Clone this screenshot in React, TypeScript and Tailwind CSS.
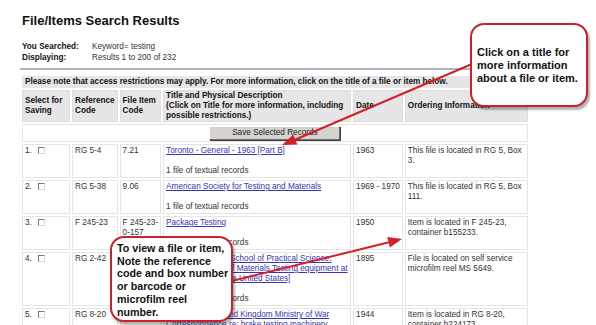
import React from 'react';

type Row = {
  n: string;
  ref: string;
  item: string[];
  title: string[];
  desc?: string;
  date: string;
  order: string[];
};

const ROWS: Row[] = [
  {
    n: '1.',
    ref: 'RG 5-4',
    item: ['7.21'],
    title: ['Toronto - General - 1963 [Part B]'],
    desc: '1 file of textual records',
    date: '1963',
    order: ['This file is located in RG 5, Box', '3.'],
  },
  {
    n: '2.',
    ref: 'RG 5-38',
    item: ['9.06'],
    title: ['American Society for Testing and Materials'],
    desc: '1 file of textual records',
    date: '1969 - 1970',
    order: ['This file is located in RG 5, Box', '111.'],
  },
  {
    n: '3.',
    ref: 'F 245-23',
    item: ['F 245-23-', '0-157'],
    title: ['Package Testing'],
    desc: '1 file of textual records',
    date: '1950',
    order: ['Item is located in F 245-23,', 'container b155233.'],
  },
  {
    n: '4.',
    ref: 'RG 2-42',
    item: [''],
    title: [
      'Univ. of Toronto - School of Practical Science.',
      '[Photo: Strength of Materials Testing equipment at',
      'purchased from the United States]',
    ],
    desc: '1 file of textual records',
    date: '1895',
    order: ['File is located on self service', 'microfilm reel MS 5649.'],
  },
  {
    n: '5.',
    ref: 'RG 8-20',
    item: [''],
    title: ['Great Britain United Kingdom Ministry of War', 'Correspondence re: brake testing machinery'],
    desc: '1 file of textual records',
    date: '1944',
    order: ['Item is located in RG 8-20,', 'container b224173.'],
  },
];

const Lines = ({ lines }: { lines: string[] }) => (
  <>
    {lines.map((l, i) => (
      <React.Fragment key={i}>
        {i > 0 && <br />}
        {l}
      </React.Fragment>
    ))}
  </>
);

const Checkbox = () => (
  <span className="inline-block w-[7px] h-[7px] ml-[6px] align-[-1px] bg-white border border-t-[#7a7a7a] border-l-[#7a7a7a] border-b-[#d8d8d8] border-r-[#d8d8d8]" />
);

const td = 'border border-[#e4e4e4] px-[2px] py-[1px] align-top';
const th = 'bg-[#e6e6e6] border border-[#dddddd] px-[2px] py-0 text-left font-bold align-middle text-[#111]';

export default function App() {
  return (
    <div className="relative w-[596px] h-[325px] overflow-hidden bg-white font-['Liberation_Sans',Arial,sans-serif] text-[#333]">
      <div className="pl-[20px] pt-[13px]">
        <h1 className="ml-[2px] text-[13px] leading-[15px] font-bold text-[#111]">File/Items Search Results</h1>

        <div className="ml-[2px] mt-[13px] grid grid-cols-[70px_auto] text-[8.2px] leading-[11px]">
          <span className="font-bold text-[#111]">You Searched:</span>
          <span>Keyword= testing</span>
          <span className="font-bold text-[#111]">Displaying:</span>
          <span>Results 1 to 200 of 232</span>
        </div>

        <div className="mt-[5px] w-[509px] h-[2px] bg-[#a9b5c0]" />

        <table className="mt-[4px] table-fixed border-separate border-spacing-[2px] text-[8.2px] leading-[10px]">
          <tbody>
            <tr>
              <td colSpan={6} className="bg-[#e6e6e6] border border-[#e6e6e6] px-[2px] py-0 font-bold text-[#111]">
                Please note that access restrictions may apply. For more information, click on the title of a file or item below.
              </td>
            </tr>
            <tr>
              <th className={`${th} w-[48px]`}>
                Select for
                <br />
                Saving
              </th>
              <th className={`${th} w-[44px]`}>
                Reference
                <br />
                Code
              </th>
              <th className={`${th} w-[39px]`}>
                File Item
                <br />
                Code
              </th>
              <th className={`${th} w-[188px]`}>
                Title and Physical Description
                <br />
                (Click on Title for more information, including
                <br />
                possible restrictions.)
              </th>
              <th className={`${th} w-[47px]`}>Date</th>
              <th className={`${th} w-[123px]`}>Ordering Information</th>
            </tr>
            <tr>
              <td colSpan={6} className="border border-[#e4e4e4] p-[1px]">
                <button className="block mx-auto w-[131px] h-[14px] bg-[#d6d3ce] border border-t-white border-l-white border-b-[#6f6f6f] border-r-[#6f6f6f] shadow-[1px_1px_0_#404040] text-[8.2px] leading-[12px] text-[#222]">
                  Save Selected Records
                </button>
              </td>
            </tr>
            {ROWS.map((r) => (
              <tr key={r.n}>
                <td className={td}>
                  {r.n}
                  <Checkbox />
                </td>
                <td className={`${td} whitespace-nowrap`}>{r.ref}</td>
                <td className={`${td} whitespace-nowrap`}>
                  <Lines lines={r.item} />
                </td>
                <td className={`${td} whitespace-nowrap overflow-hidden`}>
                  <a className="text-[#3535b5] underline">
                    <Lines lines={r.title} />
                  </a>
                  <br />
                  <br />
                  {r.desc}
                </td>
                <td className={`${td} whitespace-nowrap`}>{r.date}</td>
                <td className={`${td} whitespace-nowrap`}>
                  <Lines lines={r.order} />
                </td>
              </tr>
            ))}
          </tbody>
        </table>
      </div>

      {/* red pointer arrows */}
      <svg className="absolute left-0 top-0 pointer-events-none" width="596" height="325" viewBox="0 0 596 325">
        <line x1="472" y1="64" x2="292" y2="141" stroke="#d41f26" strokeWidth="2" />
        <polygon points="282,145 297.3,144.6 293.2,134.6" fill="#d41f26" />
        <line x1="232" y1="281" x2="390" y2="242" stroke="#d41f26" strokeWidth="2" />
        <polygon points="402,239 389.9,247.6 387.3,236.9" fill="#d41f26" />
      </svg>

      {/* callouts */}
      <div className="absolute left-[470px] top-[23px] w-[118px] h-[84px] flex items-center pl-[5px] bg-white border-2 border-[#c9202b] rounded-[14px] shadow-[2px_3px_2px_rgba(0,0,0,0.3)] text-[11px] leading-[13px] font-bold text-[#111] whitespace-nowrap">
        <div>
          Click on a title for
          <br />
          more information
          <br />
          about a file or item.
        </div>
      </div>

      <div className="absolute left-[110px] top-[236px] w-[123px] h-[86px] pl-[5px] pt-[4px] bg-white border-2 border-[#c9202b] rounded-[14px] shadow-[2px_3px_2px_rgba(0,0,0,0.3)] text-[10.7px] leading-[12.7px] font-bold text-[#111] whitespace-nowrap">
        To view a file or item,
        <br />
        Note the reference
        <br />
        code and box number
        <br />
        or barcode or
        <br />
        microfilm reel
        <br />
        number.
      </div>
    </div>
  );
}
